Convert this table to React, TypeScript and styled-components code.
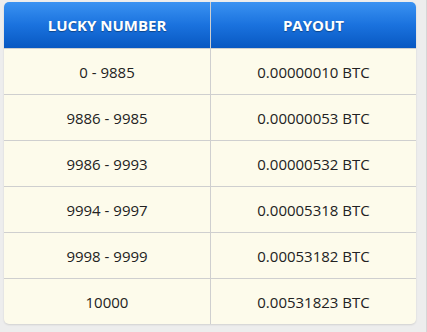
import React from "react";
import styled, { createGlobalStyle } from "styled-components";

const GlobalStyle = createGlobalStyle`
  html, body {
    margin: 0;
    background: #ededed;
    font-family: "Open Sans", "Liberation Sans", sans-serif;
  }
`

const Page = styled.div`
  width: 427px;
  height: 332px;
  padding: 2px 11px 0 4px;
  box-sizing: border-box;
  border-right: 1px solid #d6d6d6;
`

const Table = styled.div`
  width: 412px;
  border-radius: 5px;
  overflow: hidden;
  background: #fdfbeb;
  box-shadow: 0 1px 2px rgba(0, 0, 0, 0.12);
`

const Row = styled.div`
  display: grid;
  grid-template-columns: 206px 206px;
  height: 46px;
  border-top: 1px solid #cfcfcf;
  box-sizing: border-box;
  &:first-of-type {
    border-top: none;
  }
`

const Head = styled(Row)`
  background: linear-gradient(to bottom, #3a92f2 0%, #1a72de 50%, #0858c2 100%);
`

const Cell = styled.div<{ $head?: boolean }>`
  display: flex;
  align-items: center;
  justify-content: center;
  font-size: 15px;
  font-weight: ${p => (p.$head ? 700 : 400)};
  color: ${p => (p.$head ? "#ffffff" : "#222222")};
  text-shadow: ${p => (p.$head ? "0 1px 1px rgba(0,0,0,0.35)" : "none")};
  & + & {
    border-left: 1px solid ${p => (p.$head ? "#0c5cc0" : "#cfcfcf")};
  }
`

const rows = [
  ["0 - 9885", "0.00000010 BTC"],
  ["9886 - 9985", "0.00000053 BTC"],
  ["9986 - 9993", "0.00000532 BTC"],
  ["9994 - 9997", "0.00005318 BTC"],
  ["9998 - 9999", "0.00053182 BTC"],
  ["10000", "0.00531823 BTC"],
]

export default function App() {
  return <>
    <GlobalStyle />
    <Page>
      <Table>
        <Head>
          <Cell $head>LUCKY NUMBER</Cell>
          <Cell $head>PAYOUT</Cell>
        </Head>
        {rows.map(([range, payout]) => (
          <Row key={range}>
            <Cell>{range}</Cell>
            <Cell>{payout}</Cell>
          </Row>
        ))}
      </Table>
    </Page>
  </>
}
